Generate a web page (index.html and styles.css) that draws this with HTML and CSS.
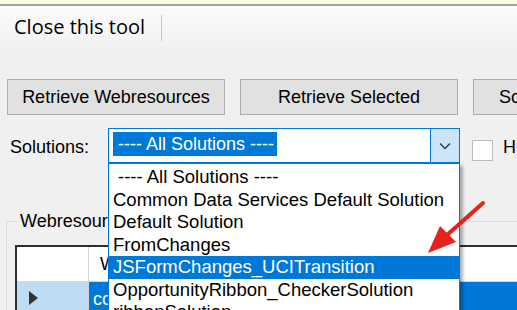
FILE: index.html
```html
<!DOCTYPE html>
<html>
<head>
    <link rel="stylesheet" href="styles.css">
</head>
<body>
    <div class="notice"></div>

    <div class="toolbar">
        <span class="toolbar-item">Close this tool</span>
        <span class="toolbar-sep"></span>
    </div>

    <div class="content">
        <div class="actions">
            <div class="btn">Retrieve Webresources</div>
            <div class="btn">Retrieve Selected</div>
            <div class="btn">Script Dependencies</div>
        </div>

        <div class="solutions">
            <span class="solutions-label">Solutions:</span>
            <div class="combo">
                <span class="combo-value">---- All Solutions ----</span>
                <span class="combo-btn">
                    <svg width="12" height="8" viewBox="0 0 12 8">
                        <polyline points="1,1.5 6,6.5 11,1.5" fill="none" stroke="#3a3a3a" stroke-width="1.4"/>
                    </svg>
                </span>
            </div>
            <span class="check"></span>
            <span class="check-label">Hide managed</span>
        </div>

        <fieldset class="group">
            <legend>Webresources</legend>
            <div class="grid">
                <div class="cell head corner"></div>
                <div class="cell head">Webresource Name</div>
                <div class="cell row-head"><span class="row-marker"></span></div>
                <div class="cell selected">contoso_/scripts/account.js</div>
            </div>
        </fieldset>
    </div>

    <!-- open dropdown of the solutions combo -->
    <ul class="dropdown">
        <li class="first">---- All Solutions ----</li>
        <li>Common Data Services Default Solution</li>
        <li>Default Solution</li>
        <li>FromChanges</li>
        <li class="active">JSFormChanges_UCITransition</li>
        <li>OpportunityRibbon_CheckerSolution</li>
        <li>ribbonSolution</li>
    </ul>

    <!-- annotation arrow -->
    <svg class="arrow" width="80" height="70" viewBox="0 0 80 70">
        <line x1="63" y1="8" x2="27" y2="40" stroke="#e8211c" stroke-width="4" stroke-linecap="round"/>
        <polygon points="8,58 20,31 36,47" fill="#e8211c"/>
    </svg>
</body>
</html>
```

FILE: styles.css
```css
* {
    box-sizing: border-box;
}

body {
    margin: 0;
    width: 517px;
    height: 310px;
    overflow: hidden;
    position: relative;
    background: #f0f0f0;
    font-family: "Liberation Sans", Arial, sans-serif;
    font-size: 18px;
    color: #000;
}

.notice {
    height: 6px;
    background: #fffde3;
    border-bottom: 2px solid #a3a3a3;
}

.toolbar {
    height: 44px;
    display: flex;
    align-items: center;
    padding: 0 0 4px 14px;
    background: linear-gradient(#fbfbfb, #f1f1f1);
    font-family: "Open Sans", sans-serif;
    font-size: 20px;
}

.toolbar-sep {
    width: 1px;
    height: 26px;
    margin: 4px 0 0 16px;
    background: #c8c8c8;
}

.content {
    padding: 29px 0 0 7px;
}

.actions {
    display: flex;
    gap: 15px;
    white-space: nowrap;
}

.btn {
    flex: none;
    width: 218px;
    height: 36px;
    display: flex;
    align-items: center;
    justify-content: center;
    background: #e1e1e1;
    border: 1px solid #adadad;
}

.solutions {
    display: flex;
    align-items: center;
    height: 35px;
    margin-top: 13px;
    white-space: nowrap;
}

.solutions-label {
    flex: none;
    width: 101px;
    padding: 3px 0 0 3px;
}

.combo {
    flex: none;
    width: 352px;
    height: 35px;
    display: flex;
    background: #fff;
    border: 1px solid #0078d7;
}

.combo-value {
    width: 164px;
    height: 24px;
    margin: 3px 0 0 4px;
    padding-left: 5px;
    line-height: 24px;
    background: #0078d7;
    color: #fff;
}

.combo-btn {
    width: 29px;
    margin-left: auto;
    display: flex;
    align-items: center;
    justify-content: center;
    background: #cce4f7;
    border-left: 1px solid #0078d7;
}

.check {
    flex: none;
    width: 21px;
    height: 21px;
    margin: 10px 0 0 12px;
    background: #fff;
    border: 1px solid #bcbcbc;
}

.check-label {
    flex: none;
    margin: 3px 0 0 10px;
}

.group {
    width: 600px;
    margin: 48px 0 0 -1px;
    padding: 13px 0 0 8px;
    border: 1px solid #dcdcdc;
}

.group legend {
    margin-left: 3px;
    padding: 0 2px;
    line-height: 21px;
}

.grid {
    display: grid;
    grid-template-columns: 72px 1fr;
    grid-template-rows: 35px 30px;
    border-top: 2px solid #2e2e2e;
    border-left: 2px solid #2e2e2e;
    white-space: nowrap;
}

.cell.head {
    background: #fff;
    border-bottom: 1px solid #d4d4d4;
    display: flex;
    align-items: center;
    padding-left: 11px;
}

.cell.corner,
.cell.row-head {
    border-right: 1px solid #d4d4d4;
}

.cell.row-head {
    background: #bfdcf4;
    padding: 9px 0 0 12px;
}

.row-marker {
    display: block;
    width: 0;
    height: 0;
    border-left: 9px solid #333;
    border-top: 7px solid transparent;
    border-bottom: 7px solid transparent;
}

.cell.selected {
    background: #0078d7;
    color: #fff;
    padding: 7px 0 0 4px;
}

.dropdown {
    position: absolute;
    left: 108px;
    top: 163px;
    width: 352px;
    height: 170px;
    margin: 0;
    padding: 2px 0 0;
    list-style: none;
    background: #fff;
    border: 1px solid #0078d7;
    box-shadow: 3px 3px 3px rgba(0, 0, 0, 0.3);
    font-size: 18.5px;
    white-space: nowrap;
}

.dropdown li {
    height: 22.5px;
    line-height: 22.5px;
    padding-left: 4px;
}

.dropdown li.first {
    padding-left: 9px;
}

.dropdown li.active {
    background: #0078d7;
    color: #fff;
}

.arrow {
    position: absolute;
    left: 420px;
    top: 195px;
}
```
